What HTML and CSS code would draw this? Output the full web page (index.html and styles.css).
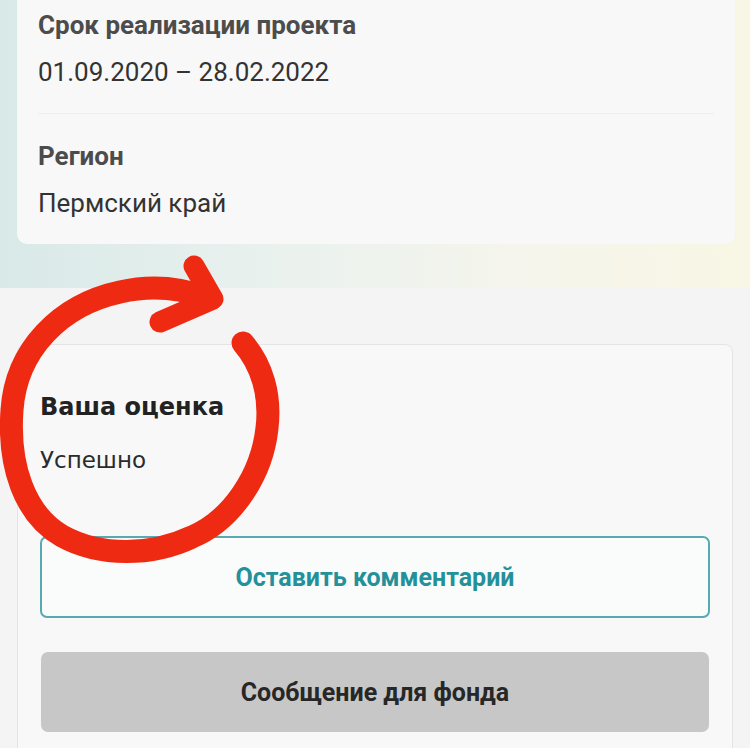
FILE: index.html
```html
<!DOCTYPE html>
<html lang="ru">
<head>
    <meta charset="UTF-8">
    <meta name="viewport" content="width=device-width, initial-scale=1.0">
    <title>Проект</title>
    <link rel="stylesheet" href="styles.css">
</head>
<body>
    <div class="page">
        <header class="project-head">
            <div class="info-card">
                <div class="info-row">
                    <div class="info-label">Срок реализации проекта</div>
                    <div class="info-value">01.09.2020 – 28.02.2022</div>
                </div>
                <div class="info-row">
                    <div class="info-label">Регион</div>
                    <div class="info-value">Пермский край</div>
                </div>
            </div>
        </header>

        <section class="rating-card">
            <h2 class="rating-title">Ваша оценка</h2>
            <p class="rating-value">Успешно</p>
            <div class="actions">
                <button class="btn btn-outline">Оставить комментарий</button>
                <button class="btn btn-gray">Сообщение для фонда</button>
            </div>
        </section>

        <!-- red hand-drawn mark on top of the page -->
        <svg class="scribble" width="750" height="748" viewBox="0 0 750 748">
            <path d="M243 343 C262 365, 271 395, 267 428 C262 475, 232 520, 192 537 C152 556, 100 557, 62 536 C24 514, 8 465, 12 410 C16 350, 60 305, 120 292 C150 285, 180 288, 205 297"
                  fill="none" stroke="#ef2a12" stroke-width="23" stroke-linecap="round"/>
            <path d="M194 266 L213 299 L160 322"
                  fill="none" stroke="#ef2a12" stroke-width="21" stroke-linecap="round" stroke-linejoin="round"/>
        </svg>
    </div>
</body>
</html>
```

FILE: styles.css
```css
/* General */
body {
    margin: 0;
    background: #f4f4f4;
    font-family: Roboto, "Liberation Sans", sans-serif;
    color: #333333;
    overflow: hidden;
}

.page {
    position: relative;
    width: 750px;
    height: 748px;
}

/* Project header with info card */
.project-head {
    background: linear-gradient(to right, #d8e9e8, #e9f1ee 35%, #f5f5ec 70%, #f8f6e4);
    padding: 0 15px 44px 17px;
}

.info-card {
    background: #f8f8f8;
    border-radius: 0 0 10px 10px;
    padding: 0 21px;
}

.info-row {
    padding: 8px 0 24px;
}

.info-row + .info-row {
    border-top: 1px solid #eeeeee;
    padding-top: 25px;
}

.info-label {
    font-size: 26px;
    line-height: 34px;
    font-weight: 700;
    color: #4c4c4c;
}

.info-value {
    margin-top: 13px;
    font-size: 26px;
    line-height: 34px;
    color: #333333;
}

/* Rating card */
.rating-card {
    margin: 56px 17px 0;
    padding: 47px 22px 40px;
    background: #f8f8f8;
    border: 1px solid #e4e4e4;
    border-radius: 8px;
}

.rating-title {
    margin: 0;
    font-family: "DejaVu Sans", sans-serif;
    font-size: 24px;
    line-height: 30px;
    font-weight: 700;
    color: #222222;
}

.rating-value {
    margin: 23px 0 0;
    font-family: "DejaVu Sans", sans-serif;
    font-size: 23px;
    line-height: 30px;
    color: #2b2b2b;
}

/* Buttons */
.actions {
    margin-top: 61px;
    display: flex;
    flex-direction: column;
    gap: 34px;
}

.btn {
    font-family: Roboto, "Liberation Sans", sans-serif;
    font-size: 25px;
    font-weight: 700;
    border-radius: 7px;
    cursor: pointer;
}

.btn-outline {
    height: 82px;
    background: #fafbfb;
    border: 2px solid #58a9b0;
    color: #24919a;
}

.btn-gray {
    height: 80px;
    margin: 0 1px;
    background: #c7c7c7;
    border: none;
    color: #272727;
}

/* Red mark */
.scribble {
    position: absolute;
    left: 0;
    top: 0;
    pointer-events: none;
}
```
